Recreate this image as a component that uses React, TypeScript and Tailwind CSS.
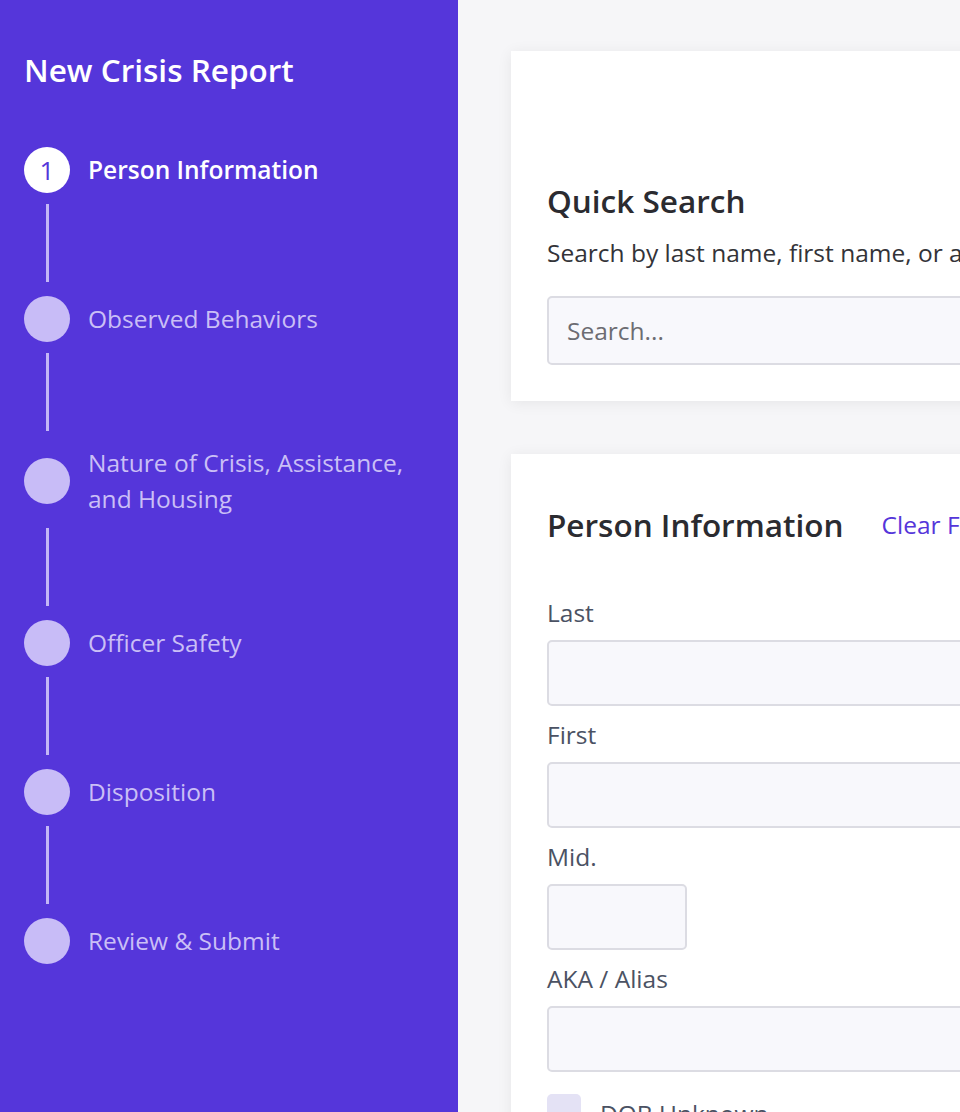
const steps = [
  { label: 'Person Information', active: true },
  { label: 'Observed Behaviors' },
  { label: 'Nature of Crisis, Assistance, and Housing' },
  { label: 'Officer Safety' },
  { label: 'Disposition' },
  { label: 'Review & Submit' },
]

function Field({ label, narrow }: { label: string; narrow?: boolean }) {
  return (
    <div className="mb-3">
      <label className="mb-[11px] block text-[24.5px] leading-[33px] text-[#4b5263]">{label}</label>
      <input
        type="text"
        className={`h-[66px] rounded-[5px] border-2 border-[#dcdce3] bg-[#f8f8fc] ${narrow ? 'w-[140px]' : 'w-full'}`}
      />
    </div>
  )
}

export default function App() {
  return (
    <div
      className="flex h-[1112px] w-[960px] overflow-hidden bg-[#f6f6f8]"
      style={{ fontFamily: '"Open Sans", sans-serif' }}
    >
      <aside className="w-[458px] shrink-0 bg-[#5536da] pl-6 pr-5 pt-[50px]">
        <h1 className="text-[31.5px] font-semibold leading-10 text-white">New Crisis Report</h1>
        <ol className="mt-[57px]">
          {steps.map((step, i) => (
            <li key={step.label}>
              {i > 0 && <div className="mb-[14px] ml-[22px] mt-[11px] h-[78px] w-[3px] bg-[#c3b6f6]" />}
              <div className="flex items-center gap-[18px]">
                {step.active ? (
                  <div className="flex h-[46px] w-[46px] shrink-0 items-center justify-center rounded-full bg-white text-[26px] text-[#5536da]">
                    {i + 1}
                  </div>
                ) : (
                  <div className="h-[46px] w-[46px] shrink-0 rounded-full bg-[#c8bcf7]" />
                )}
                <span
                  className={`text-[24.5px] leading-9 ${
                    step.active ? 'font-semibold text-white' : 'text-[#cabff6]'
                  }`}
                >
                  {step.label}
                </span>
              </div>
            </li>
          ))}
        </ol>
      </aside>

      <main className="min-w-0 flex-1 overflow-hidden pl-[53px] pt-[51px]">
        <section className="w-[860px] bg-white px-9 pb-9 pt-[130px] shadow-[0_2px_14px_rgba(0,0,0,0.07)]">
          <h2 className="text-[31.5px] font-semibold leading-10 text-[#2b2b30]">Quick Search</h2>
          <p className="mt-[15px] whitespace-nowrap text-[24.5px] leading-[33px] text-[#333338]">
            Search by last name, first name, or alias
          </p>
          <input
            type="text"
            placeholder="Search..."
            className="mt-[27px] h-[69px] w-full rounded-[5px] border-2 border-[#dcdce3] bg-[#f8f8fc] px-[18px] text-[24.5px] placeholder:text-[#6c6c72]"
          />
        </section>

        <section className="mt-[53px] w-[860px] bg-white px-9 pt-[51px] shadow-[0_2px_14px_rgba(0,0,0,0.07)]">
          <div className="flex items-center gap-[38px]">
            <h2 className="whitespace-nowrap text-[31.5px] font-semibold leading-10 text-[#2b2b30]">
              Person Information
            </h2>
            <button type="button" className="whitespace-nowrap text-[24.5px] text-[#5536da]">
              Clear Form
            </button>
          </div>
          <div className="mt-[51px]">
            <Field label="Last" />
            <Field label="First" />
            <Field label="Mid." narrow />
            <Field label="AKA / Alias" />
            <label className="mt-[22px] flex items-start gap-[19px]">
              <span className="h-[34px] w-[34px] shrink-0 rounded-[5px] bg-[#e4e2f5]" />
              <span className="text-[24.5px] leading-[40px] text-[#4b5263]">DOB Unknown</span>
            </label>
          </div>
        </section>
      </main>
    </div>
  )
}
